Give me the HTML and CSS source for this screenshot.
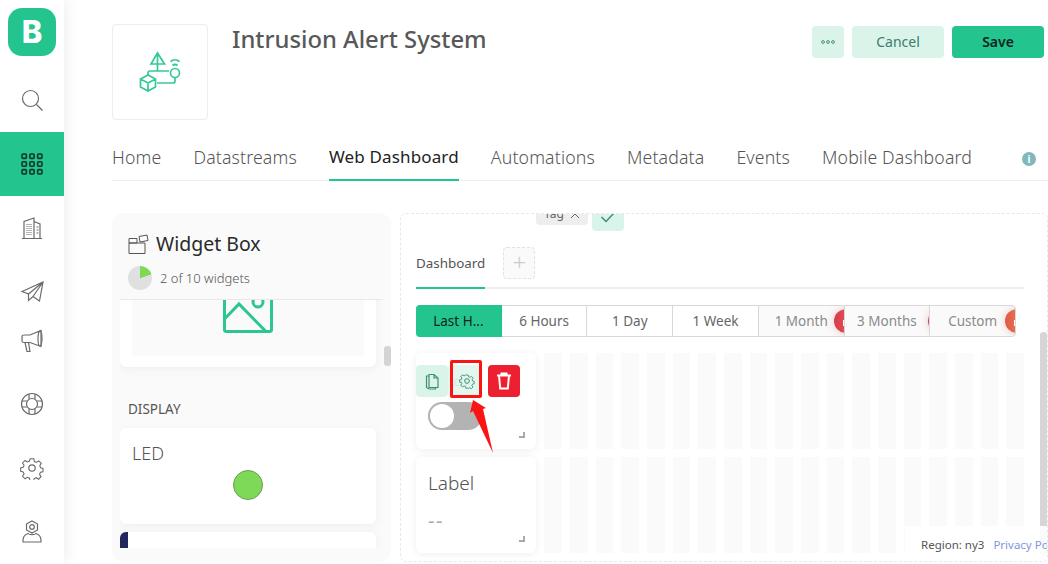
FILE: index.html
```html
<!DOCTYPE html>
<html lang="en">
<head>
  <meta charset="UTF-8" />
  <title>Intrusion Alert System</title>
  <link rel="stylesheet" href="styles.css">
</head>
<body>
  <!-- Sidebar -->
  <nav class="sidebar">
    <div class="logo">B</div>
    <a class="nav-item"><svg width="24" height="24" viewBox="0 0 24 24"><circle cx="10.5" cy="10.5" r="8"/><path d="M16.5 16.5l6 6"/></svg></a>
    <a class="nav-item active"><svg width="22" height="22" viewBox="0 0 22 22"><rect x="1" y="1" width="4.4" height="4.4" rx="1.2"/><rect x="8.8" y="1" width="4.4" height="4.4" rx="1.2"/><rect x="16.6" y="1" width="4.4" height="4.4" rx="1.2"/><rect x="1" y="8.8" width="4.4" height="4.4" rx="1.2"/><rect x="8.8" y="8.8" width="4.4" height="4.4" rx="1.2"/><rect x="16.6" y="8.8" width="4.4" height="4.4" rx="1.2"/><rect x="1" y="16.6" width="4.4" height="4.4" rx="1.2"/><rect x="8.8" y="16.6" width="4.4" height="4.4" rx="1.2"/><rect x="16.6" y="16.6" width="4.4" height="4.4" rx="1.2"/></svg></a>
    <a class="nav-item"><svg width="24" height="24" viewBox="0 0 24 24"><path d="M2 22.500h20M4 22V5.500l10-3.500v20M14 5.500l6 2.500v14"/><path d="M6.500 8.500h5M6.500 10.500h5M6.500 12.500h5M6.500 14.500h5M6.500 16.500h5M6.500 18.500h5" stroke-dasharray="1 1"/><path d="M16.500 11h2M16.500 14h2M16.500 17h2"/></svg></a>
    <a class="nav-item"><svg width="24" height="24" viewBox="0 0 24 24"><path d="M2 11.500L23 2l-3.500 19-6.500-4.500-4.500 4V14zM8.500 14L23 2M13 16.500L23 2"/></svg></a>
    <a class="nav-item nav-pull"><svg width="24" height="24" viewBox="0 0 24 24"><path d="M2 8.500c0-1 .8-1.500 2-1.500h6l11-4.500v16L10 14.500H4c-1.200 0-2-.8-2-1.500z"/><ellipse cx="20" cy="10.500" rx="2" ry="7.500"/><path d="M5 14.500l2 9h3l-1.500-9"/></svg></a>
    <a class="nav-item"><svg width="24" height="24" viewBox="0 0 24 24"><circle cx="12" cy="12" r="10.500"/><circle cx="12" cy="12" r="5.500"/><path d="M9 2v5M15 2v5M9 17v5M15 17v5M2 9h5M2 15h5M17 9h5M17 15h5"/></svg></a>
    <a class="nav-item"><svg width="24" height="24" viewBox="0 0 24 24"><circle cx="12" cy="12" r="3.200"/><path d="M10 1.800h4l.6 3 2.300 1 2.600-1.700 2.800 2.800-1.700 2.600 1 2.300 2.600.6v3.800l-2.800.6-1 2.300 1.700 2.600-2.800 2.800-2.600-1.700-2.300 1-.6 2.300h-4l-.6-2.800-2.300-1-2.600 1.700-2.800-2.800 1.700-2.600-1-2.300-2.800-.6v-3.800l2.800-.6 1-2.300-1.700-2.600 2.800-2.800 2.600 1.700 2.300-1z" transform="translate(1.200 1.200) scale(.9)"/></svg></a>
    <a class="nav-item"><svg width="24" height="24" viewBox="0 0 24 24"><path d="M12 1l5.500 3v6L12 13 6.500 10V4z"/><circle cx="12" cy="7" r="2.300"/><path d="M8 13.500c-3 1-5 3.500-5 7V22h18v-1.500c0-3.500-2-6-5-7-1 1.500-7 1.500-8 0z"/></svg></a>
  </nav>

  <main class="main">
    <!-- Device header -->
    <header class="device-head">
      <div class="device-icon">
        <svg width="60" height="60" viewBox="0 0 60 60">
          <path d="M21 22l6.500-11L34.500 22zM27.500 11v11M27.500 22v7H20a2 2 0 0 0-2 2v2M27.500 29H39"/>
          <circle cx="45" cy="31" r="4.500"/>
          <path d="M42.500 23.500a4 4 0 0 1 5 0M40.500 19.500a7 7 0 0 1 9 0M45 36v3a2 2 0 0 1-2 2H27"/>
          <path d="M10.500 37l7.500-4 7.500 4v8l-7.500 4-7.500-4zM10.500 37l7.500 4 7.500-4M18 41v8"/>
        </svg>
      </div>
      <h1 class="device-title">Intrusion Alert System</h1>
      <div class="head-actions">
        <button class="btn btn-light btn-more"><svg width="14" height="4" viewBox="0 0 14 4"><circle cx="2" cy="2" r="1.400"/><circle cx="7" cy="2" r="1.400"/><circle cx="12" cy="2" r="1.400"/></svg></button>
        <button class="btn btn-light btn-wide">Cancel</button>
        <button class="btn btn-green btn-wide">Save</button>
      </div>
    </header>

    <!-- Tabs -->
    <div class="tabs">
      <a class="tab">Home</a>
      <a class="tab">Datastreams</a>
      <a class="tab current">Web Dashboard</a>
      <a class="tab">Automations</a>
      <a class="tab">Metadata</a>
      <a class="tab">Events</a>
      <a class="tab">Mobile Dashboard</a>
      <span class="info">i</span>
    </div>

    <div class="workspace">
      <!-- Widget box -->
      <aside class="widget-box">
        <div class="box-head">
          <h2 class="box-title">
            <svg width="24" height="22" viewBox="0 0 24 22"><path d="M1 10h16v10.500H1zM1 5.500h8V10H1zM11 3.500l8-1.500 1 5.500-8 1.500z"/></svg>
            Widget Box
          </h2>
          <div class="box-count"><span class="pie"></span>2 of 10 widgets</div>
        </div>
        <div class="box-list">
          <div class="pick-card image-card">
            <div class="image-well">
              <svg width="50" height="50" viewBox="0 0 50 50"><path d="M48.500 3v44a1.500 1.500 0 0 1-1.500 1.500H3A1.500 1.500 0 0 1 1.500 47V3M1.500 36L16 21l27 27.500"/><circle cx="35" cy="19" r="5"/></svg>
            </div>
          </div>
          <div class="group-name">DISPLAY</div>
          <div class="pick-card">
            <span class="pick-name">LED</span>
            <span class="led"></span>
          </div>
          <div class="pick-card next-card"></div>
        </div>
        <span class="box-thumb"></span>
      </aside>

      <!-- Dashboard canvas -->
      <section class="canvas">
        <div class="tag-row">
          <span class="tag">Tag <svg width="10" height="10" viewBox="0 0 10 10"><path d="M1 1l8 8M9 1l-8 8"/></svg></span>
          <span class="tag-ok"><svg width="16" height="12" viewBox="0 0 16 12"><path d="M1.500 6l4.500 4.500L14.500 1.500"/></svg></span>
        </div>
        <div class="dash-tabs">
          <span class="dash-tab">Dashboard</span>
          <span class="dash-add">+</span>
        </div>
        <div class="ranges">
          <span class="range on">Last H...</span>
          <span class="range">6 Hours</span>
          <span class="range">1 Day</span>
          <span class="range">1 Week</span>
          <span class="range locked">1 Month<i class="lock"></i></span>
          <span class="range locked">3 Months<i class="lock"></i></span>
          <span class="range locked">Custom<i class="lock"></i></span>
        </div>
        <div class="grid" id="grid">
          <div class="widget">
            <span class="widget-name">Switch</span>
            <span class="switch"><i></i></span>
            <span class="resize"></span>
            <div class="widget-tools">
              <button class="tool"><svg width="18" height="18" viewBox="0 0 18 18"><path d="M6 5V2.500h5l4 3.500v9.500H6zM11 2.500V6h4"/><path d="M6 4H3.500v11.500L6 17h6.500v-1.500"/></svg></button>
              <button class="tool tool-gear"><svg width="16" height="16" viewBox="0 0 24 24"><circle cx="12" cy="12" r="3.500"/><path d="M10 2h4l.6 3 2.300 1 2.600-1.700 2.800 2.800-1.700 2.600 1 2.300 2.400.6v4l-2.800.6-1 2.300 1.700 2.600-2.800 2.800-2.600-1.700-2.300 1L14 24h-4l-.6-2.800-2.300-1-2.600 1.700-2.800-2.800 1.700-2.600-1-2.300L-.4 14v-4l2.800-.6 1-2.300-1.700-2.600 2.800-2.800 2.600 1.700 2.300-1z" transform="translate(1.200 1.200) scale(.9)"/></svg></button>
              <button class="tool tool-del"><svg width="16" height="18" viewBox="0 0 16 18"><path d="M1 3.500h14M3 3.500l1.200 13h7.600l1.200-13M5.500 3.500V1.500h5v2"/></svg></button>
            </div>
          </div>
          <div class="widget">
            <span class="widget-name big">Label</span>
            <span class="widget-val">--</span>
            <span class="resize"></span>
          </div>
        </div>
        <span class="canvas-thumb"></span>
        <div class="foot">
          <span>Region: ny3</span>
          <a class="foot-link">Privacy Policy</a>
        </div>
        <!-- annotation drawn over the screenshot -->
        <span class="mark-box"></span>
        <svg class="mark-arrow" width="30" height="60" viewBox="0 0 30 60"><path d="M5 2l13 8-3 1 10 44L5 13l-3 2z"/></svg>
      </section>
    </div>
  </main>

  <script>
    // empty grid cells behind the two widgets
    var grid = document.getElementById("grid");
    var rows = grid.querySelectorAll(".widget");
    for (var r = 0; r < 2; r++) {
      var after = rows[r];
      for (var c = 0; c < 19; c++) {
        var cell = document.createElement("span");
        cell.className = "cell";
        grid.insertBefore(cell, after.nextSibling);
      }
    }
  </script>
</body>
</html>
```
FILE: styles.css
```css
* {
  box-sizing: border-box;
}
html, body {
  height: 564px;
  margin: 0;
  overflow: hidden;
}
body {
  display: flex;
  font-family: "Noto Sans", Arial, sans-serif;
  color: #555;
  background: #fff;
}
button {
  font: inherit;
  border: 0;
  padding: 0;
}

/* sidebar */
.sidebar {
  flex: 0 0 64px;
  height: 564px;
  background: #fff;
  box-shadow: 2px 0 14px rgba(0, 0, 0, 0.07);
  padding-top: 8px;
  z-index: 2;
}
.logo {
  width: 48px;
  height: 48px;
  margin: 0 8px 12px;
  border-radius: 14px;
  background: #23c48e;
  color: #fff;
  font-family: Inter, "Noto Sans", sans-serif;
  font-weight: 800;
  font-size: 31px;
  line-height: 48px;
  text-align: center;
}
.nav-item {
  display: flex;
  align-items: center;
  justify-content: center;
  height: 64px;
}
.nav-item svg {
  fill: none;
  stroke: #6a6a6a;
  stroke-width: 1.2;
}
.nav-item.active {
  background: #23c48e;
}
.nav-item.active svg {
  stroke: #10332a;
  stroke-width: 1.6;
}
.nav-pull {
  margin-top: -16px;
}

/* main */
.main {
  flex: 1;
  min-width: 0;
  padding: 24px 0 0 48px;
}
.device-head {
  display: flex;
  height: 96px;
}
.device-icon {
  width: 96px;
  height: 96px;
  border: 1px solid #eee;
  border-radius: 4px;
  display: flex;
  align-items: center;
  justify-content: center;
}
.device-icon svg {
  fill: none;
  stroke: #34c99b;
  stroke-width: 1.700;
}
.device-title {
  margin: 0 0 0 24px;
  font-size: 23.800px;
  font-weight: 500;
  line-height: 30px;
  color: #585858;
}
.head-actions {
  margin-left: auto;
  margin-right: 4px;
  margin-top: 2px;
  display: flex;
  gap: 8px;
}
.btn {
  height: 32px;
  border-radius: 4px;
  font-size: 14px;
}
.btn-more {
  display: flex;
  align-items: center;
  justify-content: center;
  width: 32px;
}
.btn-more svg {
  fill: none;
  stroke: #4f8f80;
  stroke-width: 1;
}
.btn-wide {
  width: 92px;
  padding-bottom: 2px;
}
.btn-light {
  background: #daf4ea;
  color: #3b7d6c;
}
.btn-green {
  background: #23c48e;
  color: #10241e;
  font-weight: 600;
}

/* tabs */
.tabs {
  display: flex;
  align-items: flex-start;
  gap: 32px;
  height: 61px;
  margin-top: 0;
  padding-top: 25px;
  border-bottom: 1px solid #eee;
}
.tab {
  height: 36px;
  font-size: 17.700px;
  font-weight: 300;
  line-height: 24px;
  color: #555;
  letter-spacing: 0.15px;
}
.tab.current {
  font-size: 17px;
  color: #222;
  font-weight: 400;
  border-bottom: 2px solid #23c48e;
}
.info {
  width: 14px;
  height: 14px;
  margin: 7px 0 0 18px;
  border-radius: 50%;
  background: #7fb9bd;
  color: #fff;
  font-size: 10px;
  font-weight: 700;
  line-height: 14px;
  text-align: center;
}

/* workspace */
.workspace {
  display: flex;
  gap: 9px;
  margin-top: 32px;
  height: 349px;
}

/* widget box */
.widget-box {
  position: relative;
  flex: 0 0 279px;
  background: #fafafa;
  border-radius: 12px;
  padding: 0 8px;
}
.box-head {
  height: 87px;
  padding: 18px 8px 0;
  border-bottom: 1px solid #e8e8e8;
}
.box-title {
  display: flex;
  align-items: center;
  gap: 4px;
  margin: 0;
  font-size: 19.500px;
  font-weight: 400;
  line-height: 26px;
  color: #2a2a2a;
}
.box-title svg {
  fill: none;
  stroke: #555;
  stroke-width: 1;
}
.box-count {
  display: flex;
  align-items: center;
  gap: 8px;
  margin-top: 9px;
  font-size: 13px;
  font-weight: 300;
  line-height: 24px;
  color: #555;
}
.pie {
  width: 24px;
  height: 24px;
  border-radius: 50%;
  background: conic-gradient(#7ed957 0 20%, #e0e0e0 20%);
}
.box-list {
  height: 248px;
  overflow: hidden;
}
.pick-card {
  width: 256px;
  height: 96px;
  background: #fff;
  border-radius: 6px;
  box-shadow: 0 2px 10px rgba(0, 0, 0, 0.05);
  padding: 12px;
  margin-bottom: 8px;
}
.image-card {
  margin-top: -29px;
}
.image-well {
  height: 73px;
  background: #fafafa;
  overflow: hidden;
  display: flex;
  align-items: flex-end;
  justify-content: center;
  padding-bottom: 23px;
}
.image-well svg {
  flex: none;
  fill: none;
  stroke: #2cc593;
  stroke-width: 3;
}
.group-name {
  margin: 33px 0 10px 8px;
  font-size: 13.500px;
  line-height: 18px;
  color: #555;
}
.pick-name {
  display: block;
  font-size: 18px;
  font-weight: 300;
  line-height: 26px;
}
.led {
  display: block;
  width: 30px;
  height: 30px;
  margin: 4px auto 0;
  border-radius: 50%;
  background: #7ed957;
  border: 1px solid #6a9c58;
}
.next-card {
  margin-top: 0;
  border-left: 8px solid #23265c;
}
.box-thumb {
  position: absolute;
  left: 272px;
  top: 133px;
  width: 7px;
  height: 20px;
  border-radius: 3px;
  background: #d4d4d4;
}

/* canvas */
.canvas {
  position: relative;
  width: 648px;
  border: 1px dashed #e8e8e8;
  border-radius: 6px;
  overflow: hidden;
  padding: 0 23px 0 15px;
}
.tag-row {
  display: flex;
  align-items: flex-start;
  gap: 4px;
  height: 33px;
  margin-top: -15px;
  padding-left: 120px;
}
.tag {
  display: flex;
  align-items: flex-end;
  justify-content: center;
  gap: 6px;
  width: 52px;
  height: 26px;
  padding-bottom: 3px;
  border-radius: 4px;
  background: #eee;
  font-size: 12px;
  line-height: 16px;
  color: #666;
}
.tag svg {
  margin-bottom: 3px;
  fill: none;
  stroke: #666;
}
.tag-ok {
  display: flex;
  align-items: flex-end;
  justify-content: center;
  width: 32px;
  height: 32px;
  padding-bottom: 8px;
  border-radius: 4px;
  background: #daf4ea;
}
.tag-ok svg {
  fill: none;
  stroke: #3f8f76;
  stroke-width: 1.500;
}
.dash-tabs {
  display: flex;
  align-items: flex-start;
  gap: 18px;
  height: 42px;
  margin-top: 15px;
  border-bottom: 2px solid #eee;
}
.dash-tab {
  height: 42px;
  padding-top: 6px;
  font-size: 13.400px;
  line-height: 20px;
  color: #555;
  border-bottom: 2px solid #23c48e;
}
.dash-add {
  width: 32px;
  height: 32px;
  border: 1px dashed #e2e2e2;
  border-radius: 4px;
  background: #fafafa;
  color: #ccc;
  font-size: 24px;
  font-weight: 300;
  line-height: 28px;
  text-align: center;
}
.ranges {
  display: flex;
  width: 600px;
  height: 32px;
  margin-top: 16px;
}
.range {
  position: relative;
  flex: 1 1 0;
  overflow: hidden;
  border: 1px solid #d8d8d8;
  border-left-width: 0;
  font-size: 13.500px;
  line-height: 30px;
  text-align: center;
  color: #666;
}
.range.on {
  background: #23c48e;
  border-color: #23c48e;
  border-radius: 4px 0 0 4px;
  color: #10241e;
}
.range.locked {
  background: #fafafa;
  border-left-width: 1px;
  margin-left: -1px;
  color: #8a8a8a;
}
.range:last-child {
  border-radius: 0 4px 4px 0;
}
.lock {
  position: absolute;
  right: -14px;
  top: 3px;
  width: 24px;
  height: 24px;
  border-radius: 50%;
  background: linear-gradient(90deg, #d8394f, #e8694a);
  box-shadow: 0 0 8px rgba(216, 80, 70, 0.3);
}
.lock::after {
  content: "";
  position: absolute;
  left: 9px;
  top: 11px;
  width: 6px;
  height: 6px;
  background: #fff;
}
.range:nth-child(6) .lock {
  right: -23px;
}
.range:last-child .lock {
  background: linear-gradient(90deg, #e0594c, #ee8a4a);
}
.grid {
  display: grid;
  grid-template-columns: repeat(24, 1fr);
  grid-auto-rows: 96px;
  gap: 8px;
  width: 608px;
  margin-top: 16px;
}
.cell {
  background: #fafafa;
}
.widget {
  position: relative;
  grid-column: span 5;
  background: #fff;
  border-radius: 6px;
  box-shadow: 0 1px 8px rgba(0, 0, 0, 0.07);
  padding: 12px;
}
.widget-name {
  display: block;
  font-size: 13px;
  line-height: 32px;
  color: #c8c8c8;
}
.widget-name.big {
  font-size: 19px;
  font-weight: 300;
  line-height: 28px;
  color: #555;
}
.widget-val {
  display: block;
  margin-top: 12px;
  font-size: 20px;
  letter-spacing: 1.500px;
  line-height: 24px;
  color: #aaa;
}
.switch {
  display: block;
  width: 54px;
  height: 28px;
  margin-top: 5px;
  border-radius: 14px;
  background: #b3b3b3;
  padding: 2px;
}
.switch i {
  display: block;
  width: 24px;
  height: 24px;
  border-radius: 50%;
  background: #fff;
}
.resize {
  position: absolute;
  right: 11px;
  bottom: 11px;
  width: 6px;
  height: 6px;
  border-right: 2px solid #aaa;
  border-bottom: 2px solid #aaa;
}
.widget-tools {
  position: absolute;
  left: 0;
  top: 12px;
  display: flex;
  gap: 8px;
}
.tool {
  display: flex;
  align-items: center;
  justify-content: center;
  width: 32px;
  height: 32px;
  border-radius: 4px;
  background: #daf4ea;
}
.tool svg {
  fill: none;
  stroke: #3f8f76;
  stroke-width: 1.200;
}
.tool-gear {
  margin-left: -8px;
  padding-left: 6px;
  background: rgba(218, 244, 234, 0.75);
}
.tool-gear svg {
  stroke-width: 1.500;
}
.tool-del {
  background: #ec2031;
}
.tool-del svg {
  stroke: #fff;
  stroke-width: 2;
}
.foot {
  position: absolute;
  right: -1px;
  bottom: -1px;
  display: flex;
  gap: 9px;
  width: 143px;
  height: 36px;
  padding: 9px 0 0 16px;
  background: rgba(255, 255, 255, 0.9);
  font-size: 11.500px;
  line-height: 20px;
  white-space: nowrap;
  color: #555;
}
.foot-link {
  color: #8297e0;
}
.canvas-thumb {
  position: absolute;
  right: 0;
  top: 118px;
  width: 7px;
  height: 224px;
  background: #d6d6d6;
  border-radius: 3px;
}
.mark-box {
  position: absolute;
  left: 49px;
  top: 146px;
  width: 32px;
  height: 38px;
  border: 3px solid #fb1414;
  border-radius: 2px;
}
.mark-arrow {
  position: absolute;
  left: 67px;
  top: 184px;
  fill: #fb1414;
}
```
